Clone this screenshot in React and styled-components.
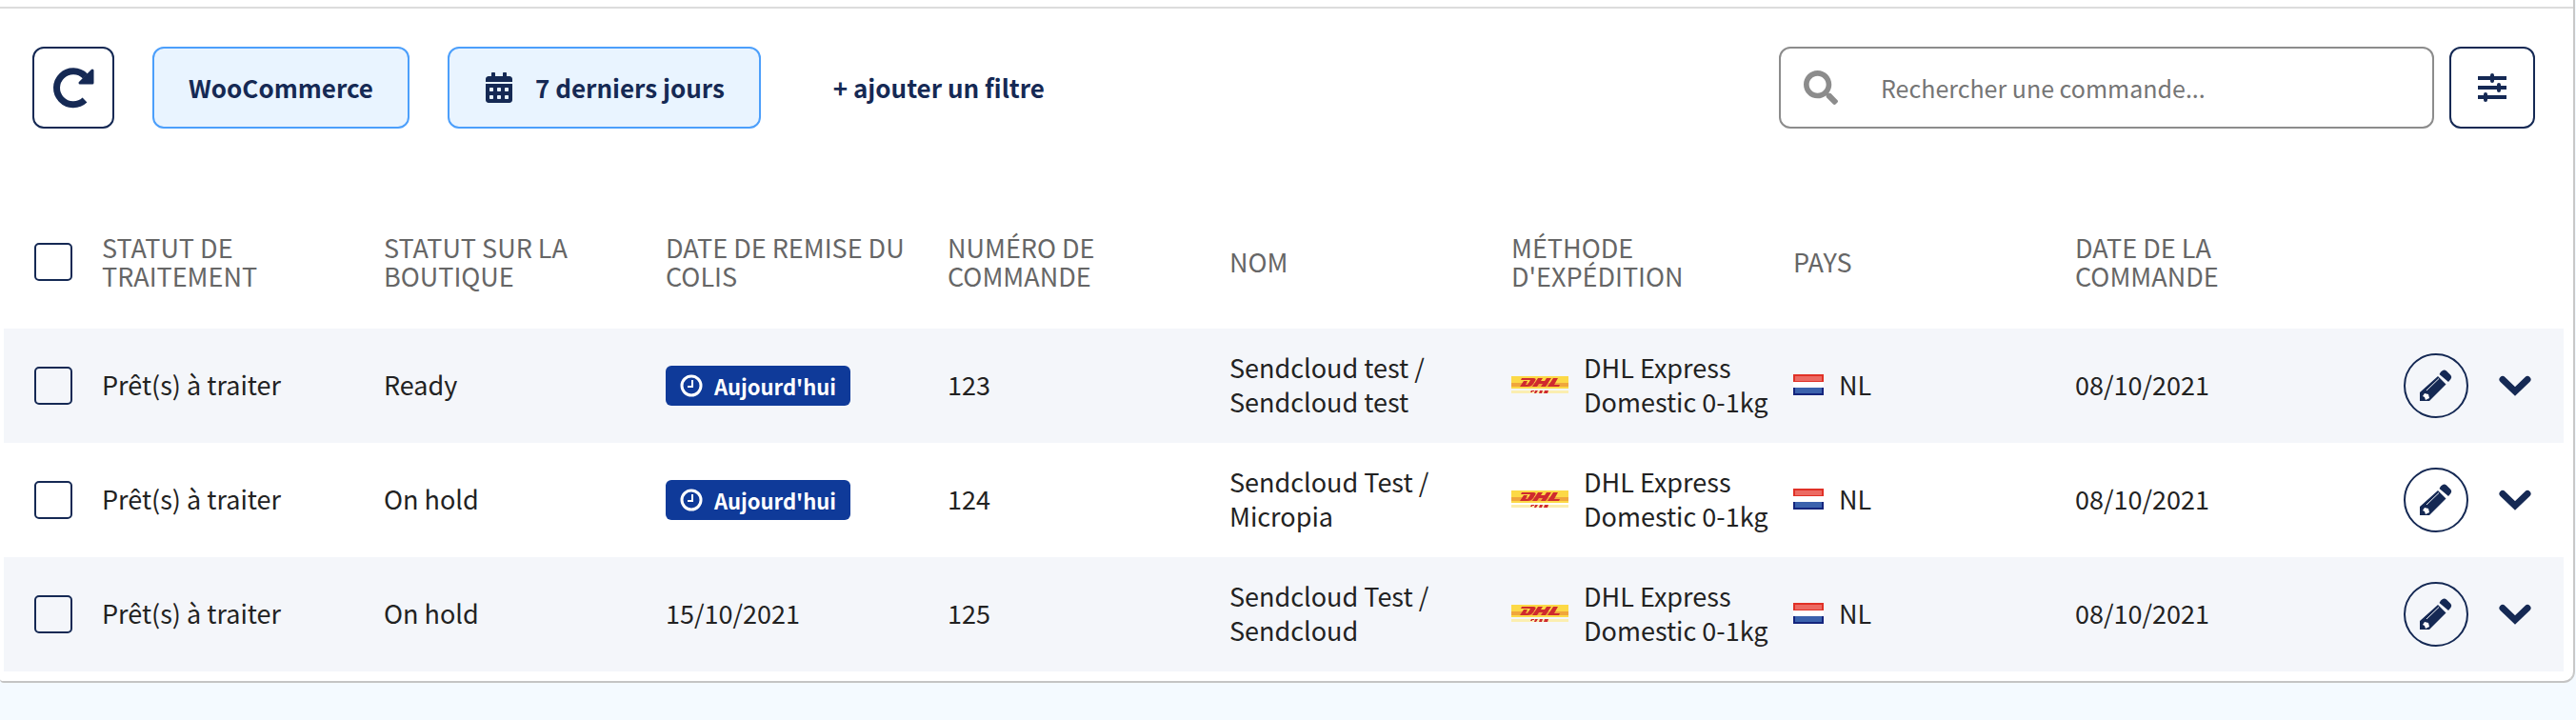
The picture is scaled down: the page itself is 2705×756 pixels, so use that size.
import React from "react";
import styled, { createGlobalStyle } from "styled-components";
import { FaCalendarAlt, FaSearch } from "react-icons/fa";

const GlobalStyle = createGlobalStyle`
  * {
    box-sizing: border-box;
  }

  body {
    margin: 0;
    background: #f4faff;
    color: #222;
    font-family: "Noto Sans CJK SC", "Noto Sans", sans-serif;
    font-size: 27px;
    line-height: 36px;
  }

  button,
  input {
    font: inherit;
  }
`;

const Panel = styled.main`
  margin-right: 1px;
  padding: 7px 10px 10px 4px;
  background: #fff;
  border-right: 2px solid #c8c8c8;
  border-bottom: 2px solid #c4c4c4;
  border-radius: 0 0 12px 4px;
`;

const Divider = styled.hr`
  height: 2px;
  margin: 0 -10px 0 -4px;
  border: 0;
  background: #dcdcdc;
`;

const Toolbar = styled.div`
  display: flex;
  align-items: center;
  gap: 40px;
  padding: 40px 30px 72px;
`;

const Button = styled.button`
  display: flex;
  align-items: center;
  justify-content: center;
  height: 86px;
  padding: 0;
  border: 2px solid #152954;
  border-radius: 12px;
  background: #fff;
  color: #152954;
  cursor: pointer;
`;

const IconButton = styled(Button)`
  flex: none;
  width: ${(props) => props.$width || 86}px;
`;

const FilterButton = styled(Button)`
  gap: 22px;
  padding: 0 36px;
  border-color: #4c9ffb;
  background: #e9f4ff;
  font-size: 26px;
  font-weight: 700;
`;

const AddFilter = styled(Button)`
  padding: 0 36px;
  border: 0;
  font-size: 26px;
  font-weight: 700;
`;

const SearchArea = styled.div`
  display: flex;
  gap: 16px;
  margin-left: auto;
`;

const SearchBox = styled.label`
  display: flex;
  align-items: center;
  gap: 45px;
  width: 688px;
  height: 86px;
  padding: 0 24px;
  border: 2px solid #8c8c8c;
  border-radius: 12px;
  color: #8c8c8c;
`;

const SearchInput = styled.input`
  flex: 1;
  min-width: 0;
  padding: 0;
  border: 0;
  outline: 0;
  background: none;
  color: #222;
  font-size: 25px;

  &::placeholder {
    color: #757575;
    opacity: 1;
  }
`;

const Table = styled.table`
  width: 100%;
  table-layout: fixed;
  border-collapse: collapse;
`;

const CheckCol = styled.col`
  width: 103px;
`;

const ActionCol = styled.col`
  width: 217px;
`;

const HeadCell = styled.th`
  height: 138px;
  padding: 0 24px 3px 0;
  color: #666;
  font-weight: 400;
  line-height: 30px;
  text-align: left;
  text-transform: uppercase;
`;

const Row = styled.tr`
  &:nth-child(odd) {
    background: #f4f6fa;
  }
`;

const Cell = styled.td`
  height: 120px;
  padding: 0 0 2px;

  &:first-child,
  &:last-child {
    padding-bottom: 0;
  }
`;

const Checkbox = styled.input`
  display: block;
  appearance: none;
  width: 40px;
  height: 40px;
  margin: 0 0 0 32px;
  border: 2px solid #152954;
  border-radius: 5px;
  background: transparent;

  &:checked {
    background: #152954;
  }
`;

const Name = styled.div`
  max-width: 230px;
`;

const Inline = styled.div`
  display: flex;
  align-items: center;
  gap: 16px;
`;

const Chip = styled.span`
  display: flex;
  align-items: center;
  gap: 12px;
  width: fit-content;
  height: 42px;
  margin-top: 2px;
  padding: 0 15px;
  border-radius: 6px;
  background: #0f3a99;
  color: #fff;
  font-size: 22px;
  font-weight: 700;
`;

const Actions = styled.div`
  display: flex;
  align-items: center;
  justify-content: flex-end;
  gap: 32px;
  padding-right: 34px;
`;

const EditButton = styled(Button)`
  width: 68px;
  height: 68px;
  border-radius: 50%;
  background: transparent;
`;

const ExpandButton = styled(Button)`
  width: 34px;
  height: 34px;
  border: 0;
  background: transparent;
`;

const RefreshIcon = () => (
  <svg width="44" height="44" viewBox="0 0 44 44" aria-hidden="true">
    <path d="M34 35A17.500 17.500 0 1 1 34.500 10" fill="none" stroke="currentColor" strokeWidth="7" />
    <path
      d="M42 4v13H29z"
      fill="currentColor"
      stroke="currentColor"
      strokeWidth="3"
      strokeLinejoin="round"
    />
  </svg>
);

const SlidersIcon = () => (
  <svg width="30" height="30" viewBox="0 0 30 30" fill="none" stroke="currentColor" aria-hidden="true">
    <path d="M0 5h30M0 15h30M0 25h30" strokeWidth="4" />
    <path d="M15 2v6M22 12v6M8 22v6" strokeWidth="4" strokeLinecap="round" />
  </svg>
);

const ClockIcon = () => (
  <svg width="24" height="24" viewBox="0 0 24 24" fill="none" stroke="currentColor" aria-hidden="true">
    <circle cx="12" cy="12" r="10" strokeWidth="3" />
    <path d="M13 6v7H8" strokeWidth="2" />
  </svg>
);

const PencilIcon = () => (
  <svg width="34" height="34" viewBox="0 0 34 34" aria-hidden="true">
    <path
      d="M22 2.500 24 1Q26 0 28 1.500L32.500 6Q34 8 32.500 10L30 13 20.500 5zM19 7 27.500 15.500 10 33H0V24z"
      fill="currentColor"
    />
    <path d="M7 22 20 9.500" stroke="#f4f6fa" strokeWidth="1" />
    <path d="M5 25l4 1 1 4-4 2-1-3-2-1z" fill="#fff" />
  </svg>
);

const ChevronIcon = () => (
  <svg width="34" height="22" viewBox="0 0 34 22" aria-hidden="true">
    <path d="M4 4.500 17 17 30 4.500" fill="none" stroke="currentColor" strokeWidth="7" strokeLinecap="round" />
  </svg>
);

const DhlLogo = () => (
  <svg width="60" height="18" viewBox="0 0 60 18" role="img" aria-label="DHL">
    <path d="M0 0h60v13H0z" fill="#fcd946" />
    <path d="M0 7h60v4H0z" fill="#f0a63c" />
    <path d="M0 15h60v3H0z" fill="#fbeeb0" />
    <g fill="#cf2a2e">
      <path d="M11 2h12q4 0 2 3l-2 3q-2 3-6 3H9l4-6h4l-2 4h2l3-5H10z" />
      <path d="M28 2h5l-2 3h4l2-3h5l-6 9h-5l2-3h-4l-2 3h-5z" />
      <path d="M44 2h5l-4 7h6l-1 2H38z" />
      <path d="M21 15h3v1h-2v1h-2zM25 15h3l-2 3h-2zM30 15h3l-1 3h-3zM35 15h4l-1 3h-4z" />
    </g>
  </svg>
);

const FlagNl = () => (
  <svg width="32" height="22" viewBox="0 0 32 22" aria-hidden="true">
    <path d="M0 0h32v22H0z" fill="#fff" />
    <path d="M0 0h32v8H0z" fill="#e03127" />
    <path d="M2 2h28v5H2z" fill="#ec6a62" />
    <path d="M0 14h32v8H0z" fill="#14257d" />
    <path d="M2 14h28v6H2z" fill="#3b62ad" />
  </svg>
);

const columns = [
  "Statut de traitement",
  "Statut sur la boutique",
  "Date de remise du colis",
  "Numéro de commande",
  "Nom",
  "Méthode d'expédition",
  "Pays",
  "Date de la commande",
];

const orders = [
  { number: "123", status: "Ready", today: true, name: "Sendcloud test / Sendcloud test" },
  { number: "124", status: "On hold", today: true, name: "Sendcloud Test / Micropia" },
  { number: "125", status: "On hold", dropOff: "15/10/2021", name: "Sendcloud Test / Sendcloud" },
];

const OrderRow = ({ order }) => {
  return (
    <Row>
      <Cell>
        <Checkbox type="checkbox" aria-label={`Commande ${order.number}`} />
      </Cell>
      <Cell>Prêt(s) à traiter</Cell>
      <Cell>{order.status}</Cell>
      <Cell>
        {order.today ? (
          <Chip>
            <ClockIcon />
            Aujourd'hui
          </Chip>
        ) : (
          order.dropOff
        )}
      </Cell>
      <Cell>{order.number}</Cell>
      <Cell>
        <Name>{order.name}</Name>
      </Cell>
      <Cell>
        <Inline>
          <DhlLogo />
          <span>
            DHL Express
            <br />
            Domestic 0-1kg
          </span>
        </Inline>
      </Cell>
      <Cell>
        <Inline>
          <FlagNl />
          NL
        </Inline>
      </Cell>
      <Cell>08/10/2021</Cell>
      <Cell>
        <Actions>
          <EditButton aria-label="Modifier">
            <PencilIcon />
          </EditButton>
          <ExpandButton aria-label="Détails">
            <ChevronIcon />
          </ExpandButton>
        </Actions>
      </Cell>
    </Row>
  );
};

const App = () => {
  return (
    <>
      <GlobalStyle />
      <Panel>
        <Divider />
        <Toolbar>
          <IconButton aria-label="Actualiser">
            <RefreshIcon />
          </IconButton>
          <FilterButton>WooCommerce</FilterButton>
          <FilterButton>
            <FaCalendarAlt size={32} />7 derniers jours
          </FilterButton>
          <AddFilter>+ ajouter un filtre</AddFilter>
          <SearchArea>
            <SearchBox>
              <FaSearch size={36} />
              <SearchInput type="text" aria-label="Rechercher" placeholder="Rechercher une commande..." />
            </SearchBox>
            <IconButton $width={90} aria-label="Filtres">
              <SlidersIcon />
            </IconButton>
          </SearchArea>
        </Toolbar>
        <Table>
          <colgroup>
            <CheckCol />
            {columns.map((column) => (
              <col key={column} />
            ))}
            <ActionCol />
          </colgroup>
          <thead>
            <tr>
              <HeadCell>
                <Checkbox type="checkbox" aria-label="Tout sélectionner" />
              </HeadCell>
              {columns.map((column) => (
                <HeadCell key={column}>{column}</HeadCell>
              ))}
              <HeadCell />
            </tr>
          </thead>
          <tbody>
            {orders.map((order) => (
              <OrderRow key={order.number} order={order} />
            ))}
          </tbody>
        </Table>
      </Panel>
    </>
  );
};

export default App;
